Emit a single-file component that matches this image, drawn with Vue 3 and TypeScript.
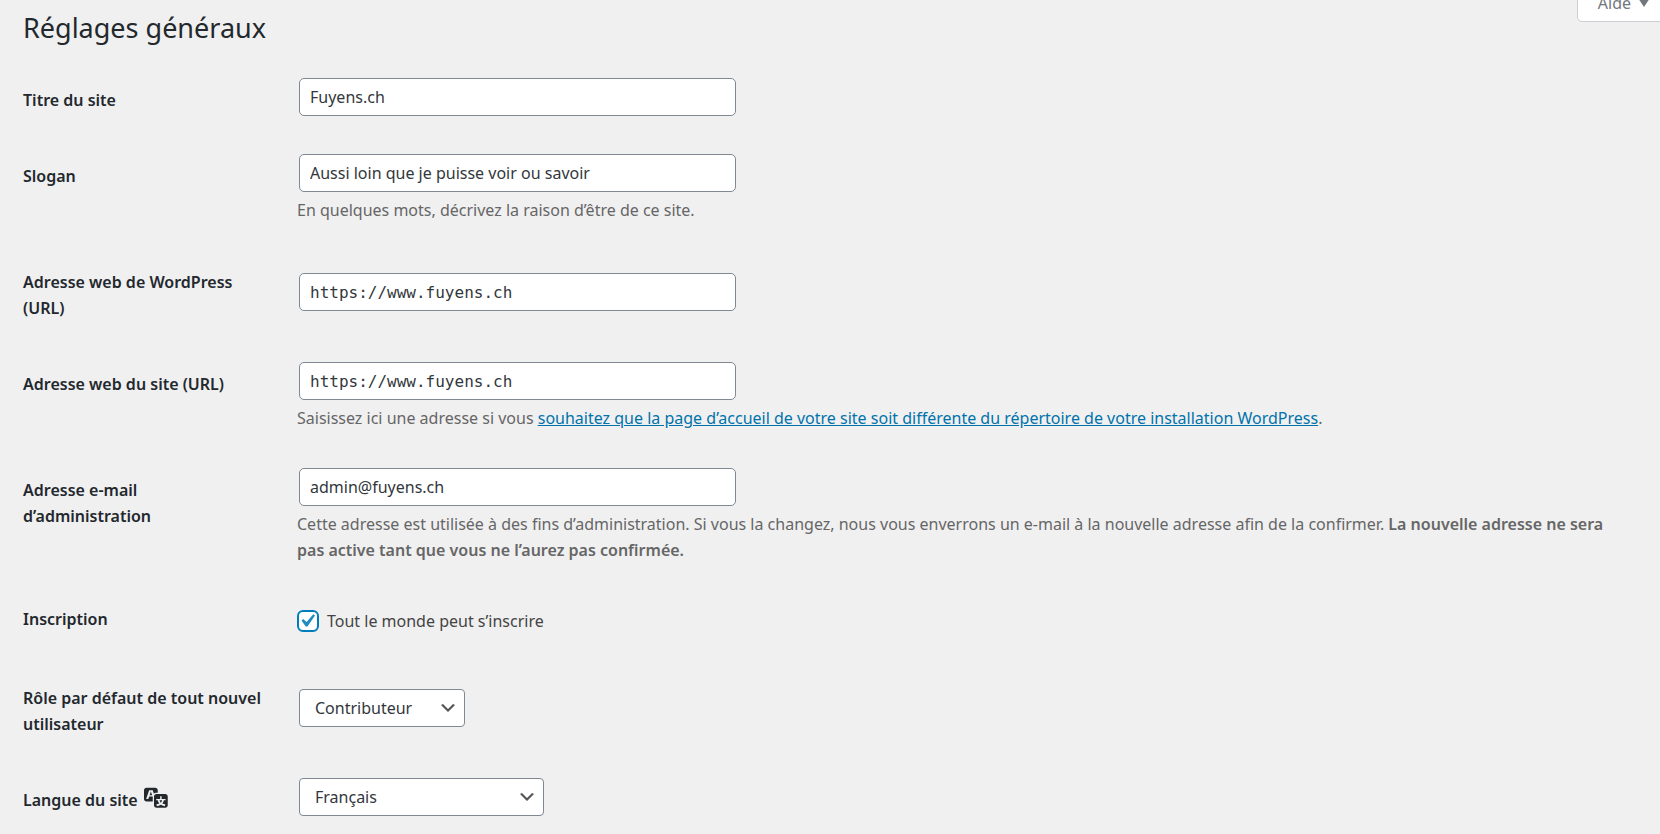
<script setup lang="ts">
import { ref } from 'vue'

const title = ref('Fuyens.ch')
const slogan = ref('Aussi loin que je puisse voir ou savoir')
const wpUrl = ref('https://www.fuyens.ch')
const siteUrl = ref('https://www.fuyens.ch')
const email = ref('admin@fuyens.ch')
const canRegister = ref(true)
const role = ref('Contributeur')
const language = ref('Français')

const roles: string[] = ['Abonné', 'Contributeur', 'Auteur', 'Éditeur']
const languages: string[] = ['English', 'Français', 'Deutsch']
</script>

<template>
  <main class="page">
    <button class="help" type="button">
      Aide
      <svg class="caret" viewBox="0 0 12 10" aria-hidden="true"><path d="M0 0h12L6 9z" /></svg>
    </button>
    <h1>Réglages généraux</h1>

    <form class="form" @submit.prevent>
      <div class="row">
        <label class="name" for="title">Titre du site</label>
        <div class="field"><input id="title" v-model="title" class="text" type="text" /></div>
      </div>

      <div class="row">
        <label class="name" for="slogan">Slogan</label>
        <div class="field">
          <input id="slogan" v-model="slogan" class="text" type="text" />
          <p class="hint">En quelques mots, décrivez la raison d’être de ce site.</p>
        </div>
      </div>

      <div class="row">
        <label class="name" for="wp-url">Adresse web de WordPress (URL)</label>
        <div class="field"><input id="wp-url" v-model="wpUrl" class="text code" type="url" /></div>
      </div>

      <div class="row">
        <label class="name" for="site-url">Adresse web du site (URL)</label>
        <div class="field">
          <input id="site-url" v-model="siteUrl" class="text code" type="url" />
          <p class="hint">
            Saisissez ici une adresse si vous
            <a href="#">souhaitez que la page d’accueil de votre site soit différente du répertoire de votre installation WordPress</a>.
          </p>
        </div>
      </div>

      <div class="row">
        <label class="name" for="email">Adresse e-mail<br />d’administration</label>
        <div class="field">
          <input id="email" v-model="email" class="text" type="email" />
          <p class="hint">
            Cette adresse est utilisée à des fins d’administration. Si vous la changez, nous vous enverrons un e-mail à la nouvelle adresse afin de la confirmer.
            <strong>La nouvelle adresse ne sera pas active tant que vous ne l’aurez pas confirmée.</strong>
          </p>
        </div>
      </div>

      <div class="row">
        <span class="name group">Inscription</span>
        <div class="field option">
          <label class="check" for="register">
            <span class="tick">
              <input id="register" v-model="canRegister" type="checkbox" />
              <svg v-if="canRegister" viewBox="0 0 20 20" aria-hidden="true">
                <path d="M14.83 4.89l1.34.94-5.81 8.38H9.02L5.78 9.67l1.34-1.25 2.57 2.4z" />
              </svg>
            </span>
            Tout le monde peut s’inscrire
          </label>
        </div>
      </div>

      <div class="row">
        <label class="name" for="role">Rôle par défaut de tout nouvel utilisateur</label>
        <div class="field">
          <span class="drop role">
            <select id="role" v-model="role">
              <option v-for="r in roles" :key="r">{{ r }}</option>
            </select>
            <svg viewBox="0 0 20 20" aria-hidden="true"><path d="M5 6l5 5 5-5 2 1-7 7-7-7 2-1z" /></svg>
          </span>
        </div>
      </div>

      <div class="row">
        <label class="name" for="language">
          Langue du site
          <svg class="translate" viewBox="0 0 20 20" aria-hidden="true">
            <path
              d="M11 7H9.49c-.63 0-1.25.3-1.59.7L7 5H4.13l-2.39 7h1.69l.74-2H7v4H2c-1.1 0-2-.9-2-2V5c0-1.1.9-2 2-2h7c1.1 0 2 .9 2 2v2zM6.51 9H4.49l1-2.93zM10 8h7c1.1 0 2 .9 2 2v7c0 1.1-.9 2-2 2h-7c-1.1 0-2-.9-2-2v-7c0-1.1.9-2 2-2zm7.25 5v-1.08h-3.17V9.75h-1.16v2.17H9.75V13h1.28c.11.85.56 1.85 1.28 2.62-.87.36-1.89.62-2.31.62-.01.02.22.97.2 1.46.84 0 2.21-.5 3.28-1.15 1.09.65 2.48 1.15 3.34 1.15-.02-.49.2-1.44.2-1.46-.43 0-1.49-.27-2.38-.63.7-.77 1.14-1.77 1.25-2.61h1.36zm-3.81 1.93c-.5-.46-.85-1.13-1.01-1.93h2.09c-.17.8-.51 1.47-1 1.93l-.04.03s-.03-.02-.04-.03z"
            />
          </svg>
        </label>
        <div class="field">
          <span class="drop language">
            <select id="language" v-model="language">
              <option v-for="l in languages" :key="l">{{ l }}</option>
            </select>
            <svg viewBox="0 0 20 20" aria-hidden="true"><path d="M5 6l5 5 5-5 2 1-7 7-7-7 2-1z" /></svg>
          </span>
        </div>
      </div>
    </form>
  </main>
</template>

<style>
body {
  margin: 0;
  background: #f0f0f1;
}
</style>

<style scoped>
.page {
  position: relative;
  overflow: hidden;
  padding: 8px 30px 0 23px;
  color: #444;
  font: 16px/26px 'Segoe UI', 'Noto Sans', 'Open Sans', sans-serif;
}

.help {
  position: absolute;
  top: -17px;
  right: -11px;
  display: flex;
  align-items: center;
  gap: 7px;
  height: 39px;
  padding: 0 20px;
  border: 1px solid #ccd0d4;
  border-radius: 0 0 5px 5px;
  background: #fff;
  color: #72777c;
  font: inherit;
}

.caret {
  width: 12px;
  height: 10px;
  fill: #72777c;
}

h1 {
  margin: 0;
  color: #23282d;
  font-size: 27px;
  font-weight: 400;
  line-height: 39px;
}

.form {
  margin-top: 12px;
}

.row {
  display: grid;
  grid-template-columns: 250px minmax(0, 1fr);
  column-gap: 24px;
  align-items: center;
  min-height: 76px;
}

.name {
  align-self: start;
  padding: 28px 0 22px;
  color: #23282d;
  font-weight: 600;
}

.group {
  padding-top: 25px;
}

.field {
  padding: 18px 0;
}

.option {
  padding: 22px 0 18px;
}

.text {
  display: block;
  box-sizing: border-box;
  width: 437px;
  max-width: 100%;
  height: 38px;
  margin: 1px 2px;
  padding: 0 10px;
  border: 1px solid #7e8993;
  border-radius: 5px;
  background: #fff;
  color: #32373c;
  font: inherit;
}

.code {
  font-family: 'DejaVu Sans Mono', monospace;
}

.hint {
  margin: 5px 0 0;
  color: #666;
}

.hint a {
  color: #0073aa;
}

.hint strong {
  font-weight: 600;
}

.check {
  display: flex;
  align-items: center;
  gap: 8px;
}

.tick {
  position: relative;
  width: 22px;
  height: 22px;
}

.tick input {
  display: block;
  box-sizing: border-box;
  width: 22px;
  height: 22px;
  margin: 0;
  border: 2px solid #007cba;
  border-radius: 6px;
  background: #fff;
  appearance: none;
}

.tick svg {
  position: absolute;
  top: -2px;
  left: -3px;
  width: 26px;
  height: 26px;
  fill: #1e8cbe;
  pointer-events: none;
}

.drop {
  position: relative;
  display: block;
  max-width: 100%;
  margin: 1px 2px;
}

.role {
  width: 166px;
}

.language {
  width: 245px;
}

.drop select {
  display: block;
  box-sizing: border-box;
  width: 100%;
  height: 38px;
  padding: 0 30px 0 15px;
  border: 1px solid #7e8993;
  border-radius: 4px;
  background: #fff;
  color: #32373c;
  font: inherit;
  appearance: none;
}

.drop svg {
  position: absolute;
  top: 9px;
  right: 7px;
  width: 20px;
  height: 20px;
  fill: #555;
  pointer-events: none;
}

.translate {
  width: 25px;
  height: 25px;
  margin: -5px 0 -3px 2px;
  fill: #23282d;
}
</style>
